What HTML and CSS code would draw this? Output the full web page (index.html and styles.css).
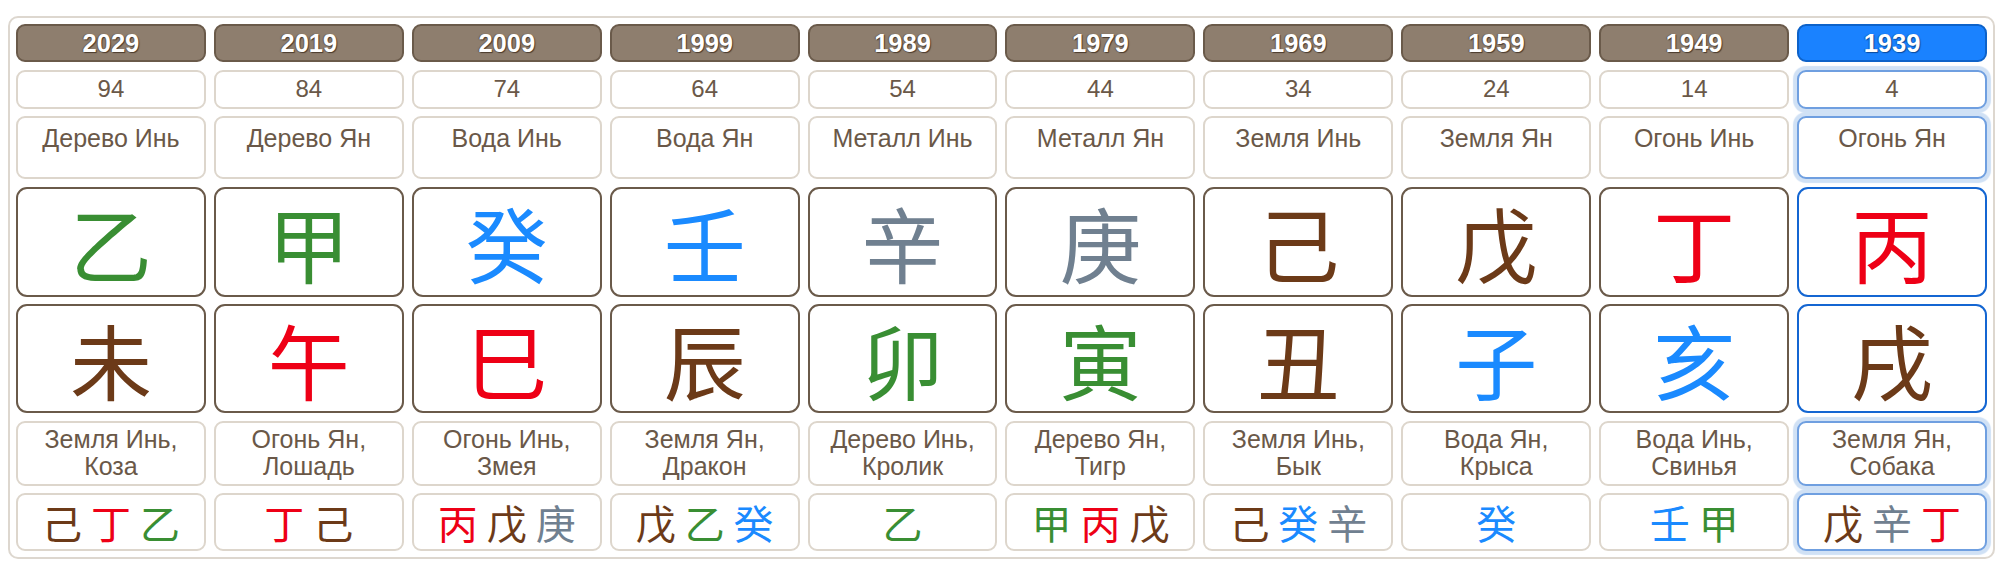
FILE: index.html
```html
<!DOCTYPE html>
<html lang="ru">
<head>
<meta charset="utf-8">
<title>Такты удачи</title>
<link rel="stylesheet" href="styles.css">
</head>
<body>
<div class="board">
  <div class="grid">
    <div class="cell year">2029</div>
    <div class="cell year">2019</div>
    <div class="cell year">2009</div>
    <div class="cell year">1999</div>
    <div class="cell year">1989</div>
    <div class="cell year">1979</div>
    <div class="cell year">1969</div>
    <div class="cell year">1959</div>
    <div class="cell year">1949</div>
    <div class="cell year sel">1939</div>

    <div class="cell age">94</div>
    <div class="cell age">84</div>
    <div class="cell age">74</div>
    <div class="cell age">64</div>
    <div class="cell age">54</div>
    <div class="cell age">44</div>
    <div class="cell age">34</div>
    <div class="cell age">24</div>
    <div class="cell age">14</div>
    <div class="cell age sel">4</div>

    <div class="cell elem">Дерево Инь</div>
    <div class="cell elem">Дерево Ян</div>
    <div class="cell elem">Вода Инь</div>
    <div class="cell elem">Вода Ян</div>
    <div class="cell elem">Металл Инь</div>
    <div class="cell elem">Металл Ян</div>
    <div class="cell elem">Земля Инь</div>
    <div class="cell elem">Земля Ян</div>
    <div class="cell elem">Огонь Инь</div>
    <div class="cell elem sel">Огонь Ян</div>

    <div class="cell big"><span class="wood">乙</span></div>
    <div class="cell big"><span class="wood">甲</span></div>
    <div class="cell big"><span class="water">癸</span></div>
    <div class="cell big"><span class="water">壬</span></div>
    <div class="cell big"><span class="metal">辛</span></div>
    <div class="cell big"><span class="metal">庚</span></div>
    <div class="cell big"><span class="earth">己</span></div>
    <div class="cell big"><span class="earth">戊</span></div>
    <div class="cell big"><span class="fire">丁</span></div>
    <div class="cell big sel"><span class="fire">丙</span></div>

    <div class="cell big"><span class="earth">未</span></div>
    <div class="cell big"><span class="fire">午</span></div>
    <div class="cell big"><span class="fire">巳</span></div>
    <div class="cell big"><span class="earth">辰</span></div>
    <div class="cell big"><span class="wood">卯</span></div>
    <div class="cell big"><span class="wood">寅</span></div>
    <div class="cell big"><span class="earth">丑</span></div>
    <div class="cell big"><span class="water">子</span></div>
    <div class="cell big"><span class="water">亥</span></div>
    <div class="cell big sel"><span class="earth">戌</span></div>

    <div class="cell animal">Земля Инь,<br>Коза</div>
    <div class="cell animal">Огонь Ян,<br>Лошадь</div>
    <div class="cell animal">Огонь Инь,<br>Змея</div>
    <div class="cell animal">Земля Ян,<br>Дракон</div>
    <div class="cell animal">Дерево Инь,<br>Кролик</div>
    <div class="cell animal">Дерево Ян,<br>Тигр</div>
    <div class="cell animal">Земля Инь,<br>Бык</div>
    <div class="cell animal">Вода Ян,<br>Крыса</div>
    <div class="cell animal">Вода Инь,<br>Свинья</div>
    <div class="cell animal sel">Земля Ян,<br>Собака</div>

    <div class="cell hidden"><span class="earth">己</span> <span class="fire">丁</span> <span class="wood">乙</span></div>
    <div class="cell hidden"><span class="fire">丁</span> <span class="earth">己</span></div>
    <div class="cell hidden"><span class="fire">丙</span> <span class="earth">戊</span> <span class="metal">庚</span></div>
    <div class="cell hidden"><span class="earth">戊</span> <span class="wood">乙</span> <span class="water">癸</span></div>
    <div class="cell hidden"><span class="wood">乙</span></div>
    <div class="cell hidden"><span class="wood">甲</span> <span class="fire">丙</span> <span class="earth">戊</span></div>
    <div class="cell hidden"><span class="earth">己</span> <span class="water">癸</span> <span class="metal">辛</span></div>
    <div class="cell hidden"><span class="water">癸</span></div>
    <div class="cell hidden"><span class="water">壬</span> <span class="wood">甲</span></div>
    <div class="cell hidden sel"><span class="earth">戊</span> <span class="metal">辛</span> <span class="fire">丁</span></div>
  </div>
</div>
</body>
</html>
```

FILE: styles.css
```css
html, body {
  background: #ffffff;
}

body {
  margin: 8px;
  font-family: "Liberation Sans", Arial, "Noto Sans CJK SC", sans-serif;
  color: #6a5848;
}

.board {
  margin-top: 8px;
  width: 1987px;
  box-sizing: border-box;
  border: 2px solid #ddd7cf;
  border-radius: 10px;
  padding: 6px;
  background: #ffffff;
}

.grid {
  display: grid;
  grid-template-columns: repeat(10, 1fr);
  grid-template-rows: 38px 39px 63px 110px 109px 65px 58px;
  column-gap: 8px;
  row-gap: 7.5px;
}

.cell {
  box-sizing: border-box;
  border: 2px solid #ddd6cc;
  border-radius: 9px;
  background: #ffffff;
  text-align: center;
}

.year {
  background: #8e7e6e;
  border-color: #6a5a4a;
  border-radius: 9px;
  color: #ffffff;
  font-weight: bold;
  font-size: 25.5px;
  display: flex;
  align-items: center;
  justify-content: center;
  text-shadow: 1px 1px 1px #4a3a2c, -1px 0 1px #6a5a4a;
}

.year.sel {
  background: #1a82ff;
  border-color: #0d62c9;
  text-shadow: 1px 1px 1px #0a4a9a, -1px 0 1px #0d5ab8;
}

.age {
  font-size: 24px;
  display: flex;
  align-items: center;
  justify-content: center;
}

.elem {
  font-size: 25px;
  line-height: 28px;
  padding-top: 6px;
}

.animal {
  font-size: 25px;
  line-height: 27px;
  display: flex;
  align-items: center;
  justify-content: center;
}

.big {
  border-color: #6a5a4a;
  border-radius: 11px;
  font-family: "Noto Sans CJK SC", sans-serif;
  font-size: 82px;
  display: flex;
  align-items: center;
  justify-content: center;
}

.big.sel {
  border-color: #1466d2;
}

.hidden {
  font-family: "Noto Sans CJK SC", sans-serif;
  font-size: 40px;
  line-height: 54px;
  word-spacing: 0;
}

.age.sel,
.elem.sel,
.animal.sel,
.hidden.sel {
  border-color: #6f9fe0;
  box-shadow: 0 0 1px 4px #d0e1f5;
}

.wood { color: #398e33; }
.water { color: #1a8aff; }
.fire { color: #ee0016; }
.earth { color: #6c3a18; }
.metal { color: #708090; }
```
